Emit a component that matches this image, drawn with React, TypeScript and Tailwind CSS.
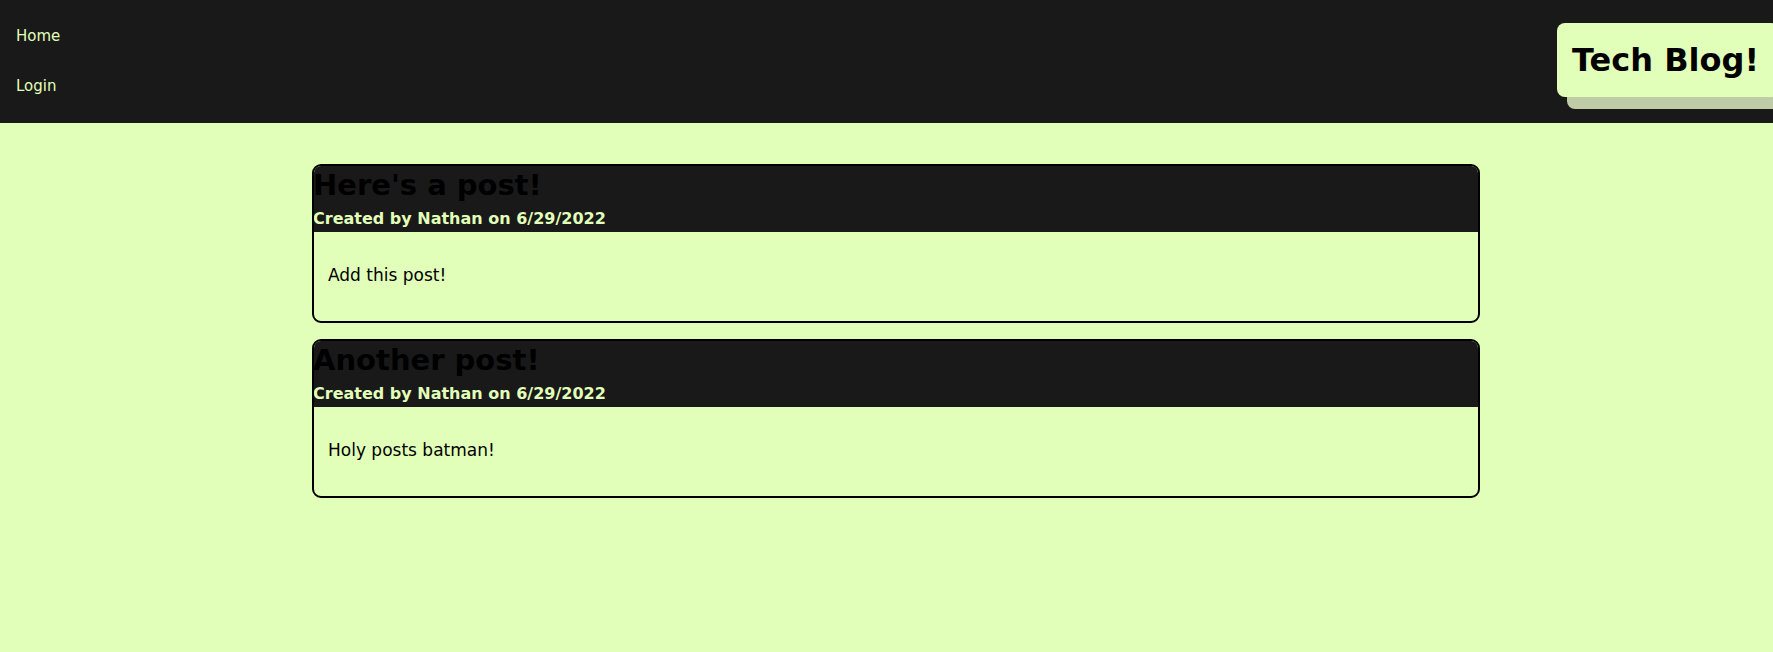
import React from 'react';

const posts = [
  { title: "Here's a post!", author: 'Nathan', date: '6/29/2022', body: 'Add this post!' },
  { title: 'Another post!', author: 'Nathan', date: '6/29/2022', body: 'Holy posts batman!' },
];

const PostCard = ({ title, author, date, body }: (typeof posts)[number]) => (
  <div className="border-2 border-black rounded-[9px] overflow-hidden h-[159px] flex flex-col">
    <div className="bg-[#191919] pt-[3px] pb-[3px] h-[66px] shrink-0">
      <h2 className="text-[29px] leading-[33px] font-bold text-black -ml-[1px]">{title}</h2>
      <p className="text-[16px] leading-[21px] mt-[6px] font-bold text-[#e2ffba] -ml-[1px]">
        Created by {author} on {date}
      </p>
    </div>
    <div className="pl-[14px] pt-[33px]">
      <p className="text-[17px] leading-[20px] text-black">{body}</p>
    </div>
  </div>
);

export default function App() {
  return (
    <div className="min-h-screen bg-[#e2ffba] font-['DejaVu_Sans',sans-serif]">
      <header className="bg-[#191919] h-[123px] flex justify-between items-start overflow-hidden">
        <nav className="flex flex-col pl-[16px] pt-[27px] gap-[32px]">
          <a href="#" className="text-[15px] leading-[18px] text-[#e2ffba]">Home</a>
          <a href="#" className="text-[15px] leading-[18px] text-[#e2ffba]">Login</a>
        </nav>
        <div className="mt-[23px] -mr-[6px] bg-[#e2ffba] rounded-[8px] pl-[15px] pr-[20px] py-[17px] shadow-[10px_12px_0_#bfcca6]">
          <h1 className="text-[32px] leading-[40px] font-bold text-black">Tech Blog!</h1>
        </div>
      </header>
      <main className="pl-[312px] pt-[41px] w-[1480px] flex flex-col gap-[16px]">
        {posts.map((p) => (
          <PostCard key={p.title} {...p} />
        ))}
      </main>
    </div>
  );
}
